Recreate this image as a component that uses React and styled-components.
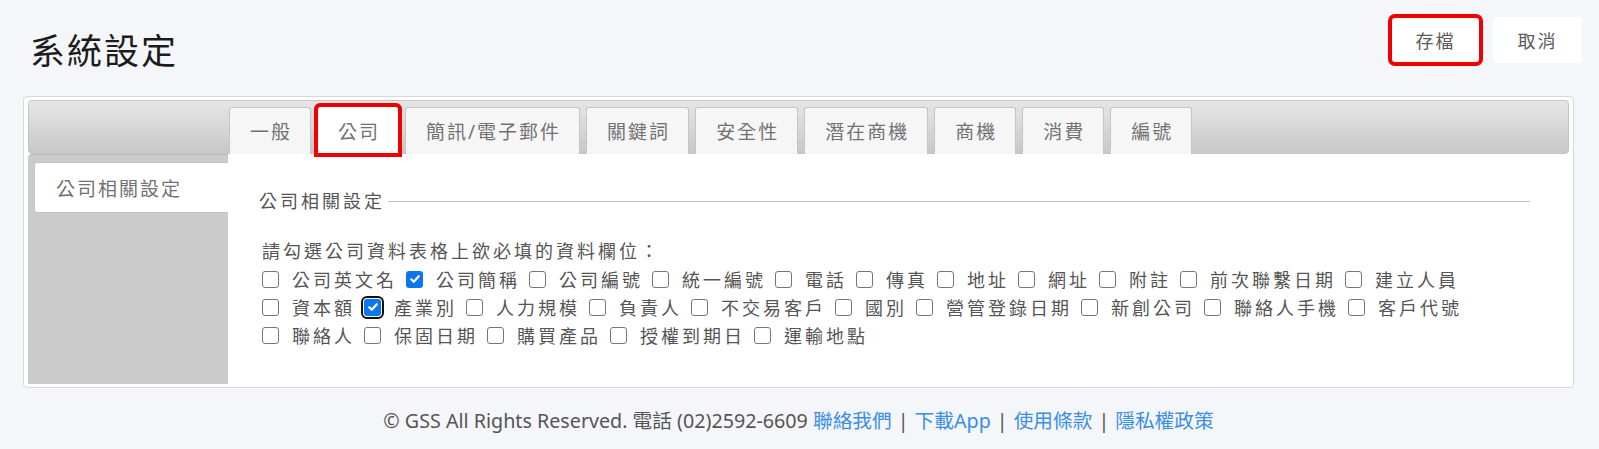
import React from 'react';
import styled, { createGlobalStyle } from 'styled-components';

const GlobalStyle = createGlobalStyle`
  body {
    margin: 0;
    background: #f5f6fa;
    font-family: "Noto Sans", "Noto Sans CJK TC", sans-serif;
    color: #333;
  }
`;

const Page = styled.div`
  padding: 17px 25px 0 23px;
`;

const Header = styled.div`
  display: flex;
  align-items: flex-start;
  justify-content: space-between;
  height: 79px;
  margin-right: -8px;
`;

const Title = styled.h1`
  margin: 13px 0 0 7px;
  font-size: 35px;
  line-height: 42px;
  font-weight: 400;
  letter-spacing: 2px;
  color: #1c1c1c;
`;

const Actions = styled.div`
  display: flex;
  gap: 13px;
`;

const ActionButton = styled.button`
  width: 89px;
  height: 46px;
  border: none;
  border-radius: 4px;
  background: #fff;
  font-family: inherit;
  font-size: 18px;
  letter-spacing: 2px;
  color: #5a5a5a;
  outline: ${({ $marked }) => ($marked ? '4px solid #f00000' : 'none')};
  outline-offset: -1px;
`;

const Panel = styled.div`
  background: #fff;
  border: 1px solid #d9d9d9;
  border-radius: 4px;
  padding: 3px 4px 3px 4px;
`;

const TabBar = styled.div`
  display: flex;
  align-items: flex-end;
  gap: 6px;
  height: 54px;
  box-sizing: border-box;
  padding-left: 200px;
  border: 1px solid #c5c5c5;
  border-radius: 4px;
  background: linear-gradient(#e6e6e6, #c8c8c8);
`;

const Tab = styled.div`
  display: flex;
  align-items: center;
  box-sizing: border-box;
  height: ${({ $active }) => ($active ? '48px' : '47px')};
  margin-bottom: -1px;
  padding: 0 18px 0 20px;
  border: 1px solid #c5c5c5;
  border-bottom: none;
  border-radius: 3px 3px 0 0;
  background: ${({ $active }) => ($active ? '#fff' : '#f6f6f6')};
  font-size: 19px;
  letter-spacing: 2px;
  color: #727272;
  outline: ${({ $marked }) => ($marked ? '4px solid #f00000' : 'none')};
  outline-offset: -1px;
  position: relative;
`;

const Body = styled.div`
  display: flex;
  height: 230px;
`;

const SideNav = styled.div`
  width: 200px;
  background: #cbcbcb;
  padding-top: 7px;
  box-sizing: border-box;
  border-top: 1px solid #bdbdbd;
  border-radius: 4px 0 0 0;
`;

const SideItem = styled.div`
  display: flex;
  align-items: center;
  height: 49px;
  margin-left: 6px;
  padding-left: 21px;
  border: 1px solid #c5c5c5;
  border-right: none;
  border-radius: 3px 0 0 3px;
  background: #fff;
  font-size: 19px;
  letter-spacing: 2px;
  color: #727272;
`;

const Content = styled.div`
  flex: 1;
  padding: 33px 39px 0 31px;
`;

const Legend = styled.div`
  display: flex;
  align-items: center;
  gap: 3px;
  font-size: 18px;
  line-height: 28px;
  letter-spacing: 3px;
  color: #555;

  &::after {
    content: '';
    flex: 1;
    border-top: 1px solid #bdbdbd;
  }
`;

const Fields = styled.div`
  margin-top: 23px;
  padding-left: 3px;
  font-size: 18px;
  letter-spacing: 3px;
  color: #555;
`;

const Intro = styled.div`
  line-height: 27px;
`;

const CheckList = styled.div`
  display: flex;
  flex-wrap: wrap;
`;

const CheckItem = styled.label`
  display: flex;
  align-items: center;
  height: 28px;
  margin-right: 9px;
`;

const Box = styled.span`
  display: flex;
  align-items: center;
  justify-content: center;
  flex: none;
  box-sizing: border-box;
  width: 17px;
  height: 17px;
  margin-right: 13px;
  border: ${({ $checked }) => ($checked ? 'none' : '1.5px solid #767676')};
  border-radius: 3px;
  background: ${({ $checked }) => ($checked ? '#0b76f0' : '#fff')};
  outline: ${({ $focused }) => ($focused ? '2.5px solid #111' : 'none')};
  outline-offset: 1.5px;
`;

const Footer = styled.div`
  margin-top: 20px;
  text-align: center;
  font-size: 19.7px;
  line-height: 26px;
  color: #555;
`;

const FooterLink = styled.a`
  color: #3a8ee6;
  text-decoration: none;
`;

const Sep = styled.span`
  margin: 0 6px;
  color: #555;
`;

const tabs = ['一般', '公司', '簡訊/電子郵件', '關鍵詞', '安全性', '潛在商機', '商機', '消費', '編號'];

const fields = [
  { name: '公司英文名' },
  { name: '公司簡稱', checked: true },
  { name: '公司編號' },
  { name: '統一編號' },
  { name: '電話' },
  { name: '傳真' },
  { name: '地址' },
  { name: '網址' },
  { name: '附註' },
  { name: '前次聯繫日期' },
  { name: '建立人員' },
  { name: '資本額' },
  { name: '產業別', checked: true, focused: true },
  { name: '人力規模' },
  { name: '負責人' },
  { name: '不交易客戶' },
  { name: '國別' },
  { name: '營管登錄日期' },
  { name: '新創公司' },
  { name: '聯絡人手機' },
  { name: '客戶代號' },
  { name: '聯絡人' },
  { name: '保固日期' },
  { name: '購買產品' },
  { name: '授權到期日' },
  { name: '運輸地點' },
];

const links = ['聯絡我們', '下載App', '使用條款', '隱私權政策'];

function Checkbox({ checked, focused }) {
  return (
    <Box $checked={checked} $focused={focused} role="checkbox" aria-checked={!!checked}>
      {checked && (
        <svg width="12" height="12" viewBox="0 0 12 12">
          <path d="M2.2 6.3 L4.8 8.8 L9.8 3.2" fill="none" stroke="#fff" strokeWidth="2.2" strokeLinecap="round" strokeLinejoin="round" />
        </svg>
      )}
    </Box>
  );
}

export default function App() {
  return (
    <>
      <GlobalStyle />
      <Page>
        <Header>
          <Title>系統設定</Title>
          <Actions>
            <ActionButton $marked>存檔</ActionButton>
            <ActionButton>取消</ActionButton>
          </Actions>
        </Header>

        <Panel>
          <TabBar>
            {tabs.map((t) => (
              <Tab key={t} $active={t === '公司'} $marked={t === '公司'}>
                {t}
              </Tab>
            ))}
          </TabBar>
          <Body>
            <SideNav>
              <SideItem>公司相關設定</SideItem>
            </SideNav>
            <Content>
              <Legend>公司相關設定</Legend>
              <Fields>
                <Intro>請勾選公司資料表格上欲必填的資料欄位：</Intro>
                <CheckList>
                  {fields.map((f) => (
                    <CheckItem key={f.name}>
                      <Checkbox checked={f.checked} focused={f.focused} />
                      {f.name}
                    </CheckItem>
                  ))}
                </CheckList>
              </Fields>
            </Content>
          </Body>
        </Panel>

        <Footer>
          © GSS All Rights Reserved. 電話 (02)2592-6609{' '}
          {links.map((l, i) => (
            <React.Fragment key={l}>
              {i > 0 && <Sep>|</Sep>}
              <FooterLink href="#">{l}</FooterLink>
            </React.Fragment>
          ))}
        </Footer>
      </Page>
    </>
  );
}
